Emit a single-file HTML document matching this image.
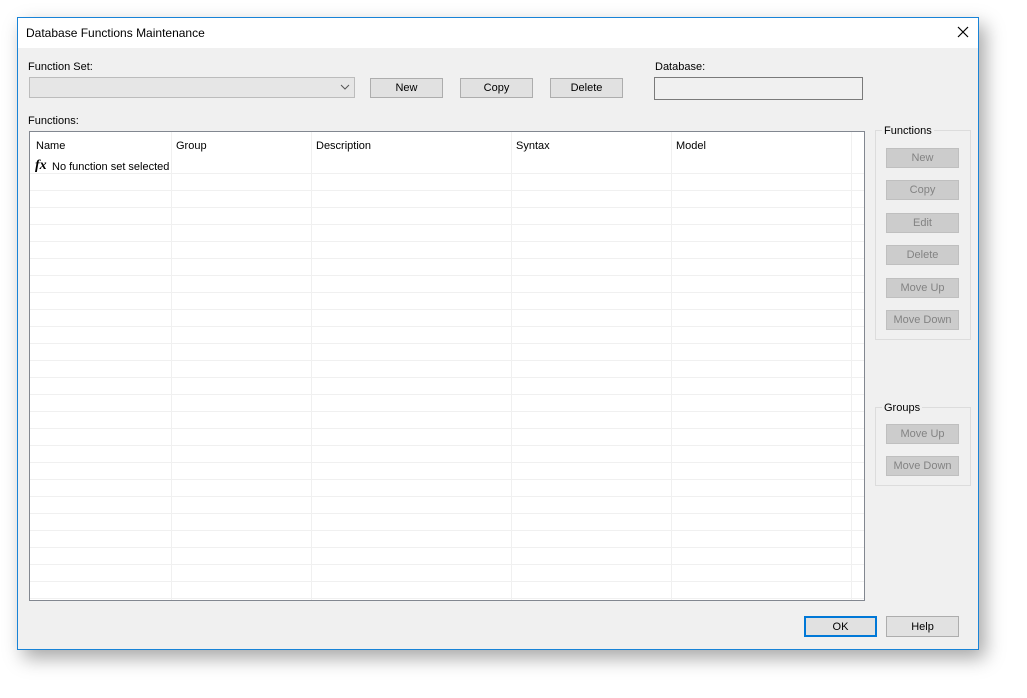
<!DOCTYPE html><html><head><style>
body{margin:0;width:1027px;height:698px;background:#fff;position:relative;overflow:hidden;font-family:"Liberation Sans",sans-serif;font-size:11px;color:#000}
.a{position:absolute}
.win{left:17px;top:17px;width:960px;height:631px;border:1px solid #1883d7;background:#f0f0f0;box-shadow:6px 8px 18px rgba(0,0,0,.35)}
.btn{position:absolute;background:#e1e1e1;border:1px solid #adadad;box-sizing:border-box;text-align:center;line-height:19px;height:20px;width:73px}
.dis{background:#cccccc;border-color:#bfbfbf;color:#838383}
.hl{position:absolute;left:30px;width:834px;height:1px;background:#f0f0f0}
.vl{position:absolute;width:1px;background:#f0f0f0;top:132px;height:468px}
</style></head><body>
<div class="a win"></div>
<div class="a" style="left:18px;top:18px;width:960px;height:30px;background:#fff"></div>
<div class="a" style="left:26px;top:26px;font-size:12px">Database Functions Maintenance</div>
<svg class="a" style="left:957px;top:26px" width="12" height="12"><path d="M1 1L11 11M11 1L1 11" stroke="#000" stroke-width="1.2"/></svg>
<div class="a" style="left:28px;top:61px">Function Set:</div>
<div class="a" style="left:29px;top:77px;width:326px;height:21px;box-sizing:border-box;border:1px solid #bcbcbc;background:#e6e6e6"></div>
<svg class="a" style="left:340px;top:84px" width="10" height="6"><path d="M1 1L5 5L9 1" stroke="#555" fill="none"/></svg>
<div class="btn" style="left:370px;top:78px">New</div>
<div class="btn" style="left:460px;top:78px">Copy</div>
<div class="btn" style="left:550px;top:78px">Delete</div>
<div class="a" style="left:655px;top:61px">Database:</div>
<div class="a" style="left:654px;top:77px;width:209px;height:23px;box-sizing:border-box;border:1px solid #7a7a7a;background:#f0f0f0"></div>
<div class="a" style="left:28px;top:115px">Functions:</div>
<div class="a" style="left:29px;top:131px;width:836px;height:470px;box-sizing:border-box;border:1px solid #828790;background:#fff"></div>
<div class="hl" style="top:173px"></div><div class="hl" style="top:190px"></div><div class="hl" style="top:207px"></div><div class="hl" style="top:224px"></div><div class="hl" style="top:241px"></div><div class="hl" style="top:258px"></div><div class="hl" style="top:275px"></div><div class="hl" style="top:292px"></div><div class="hl" style="top:309px"></div><div class="hl" style="top:326px"></div><div class="hl" style="top:343px"></div><div class="hl" style="top:360px"></div><div class="hl" style="top:377px"></div><div class="hl" style="top:394px"></div><div class="hl" style="top:411px"></div><div class="hl" style="top:428px"></div><div class="hl" style="top:445px"></div><div class="hl" style="top:462px"></div><div class="hl" style="top:479px"></div><div class="hl" style="top:496px"></div><div class="hl" style="top:513px"></div><div class="hl" style="top:530px"></div><div class="hl" style="top:547px"></div><div class="hl" style="top:564px"></div><div class="hl" style="top:581px"></div><div class="hl" style="top:598px"></div>
<div class="vl" style="left:171px"></div><div class="vl" style="left:311px"></div><div class="vl" style="left:511px"></div><div class="vl" style="left:671px"></div><div class="vl" style="left:851px"></div>
<div class="a" style="left:36px;top:140px">Name</div>
<div class="a" style="left:176px;top:140px">Group</div>
<div class="a" style="left:316px;top:140px">Description</div>
<div class="a" style="left:516px;top:140px">Syntax</div>
<div class="a" style="left:676px;top:140px">Model</div>
<div class="a" style="left:35px;top:158px;font-family:'Liberation Serif',serif;font-style:italic;font-weight:bold;font-size:14px">fx</div>
<div class="a" style="left:52px;top:161px">No function set selected</div>
<div class="a" style="left:875px;top:130px;width:96px;height:210px;box-sizing:border-box;border:1px solid #dcdcdc"></div>
<div class="a" style="left:882px;top:125px;background:#f0f0f0;padding:0 2px">Functions</div>
<div class="btn dis" style="left:886px;top:148px">New</div>
<div class="btn dis" style="left:886px;top:180px">Copy</div>
<div class="btn dis" style="left:886px;top:213px">Edit</div>
<div class="btn dis" style="left:886px;top:245px">Delete</div>
<div class="btn dis" style="left:886px;top:278px">Move Up</div>
<div class="btn dis" style="left:886px;top:310px">Move Down</div>
<div class="a" style="left:875px;top:407px;width:96px;height:79px;box-sizing:border-box;border:1px solid #dcdcdc"></div>
<div class="a" style="left:882px;top:402px;background:#f0f0f0;padding:0 2px">Groups</div>
<div class="btn dis" style="left:886px;top:424px">Move Up</div>
<div class="btn dis" style="left:886px;top:456px">Move Down</div>
<div class="btn" style="left:804px;top:616px;height:21px;border:2px solid #0078d7;line-height:19px">OK</div>
<div class="btn" style="left:886px;top:616px;height:21px;line-height:21px">Help</div>
</body></html>
